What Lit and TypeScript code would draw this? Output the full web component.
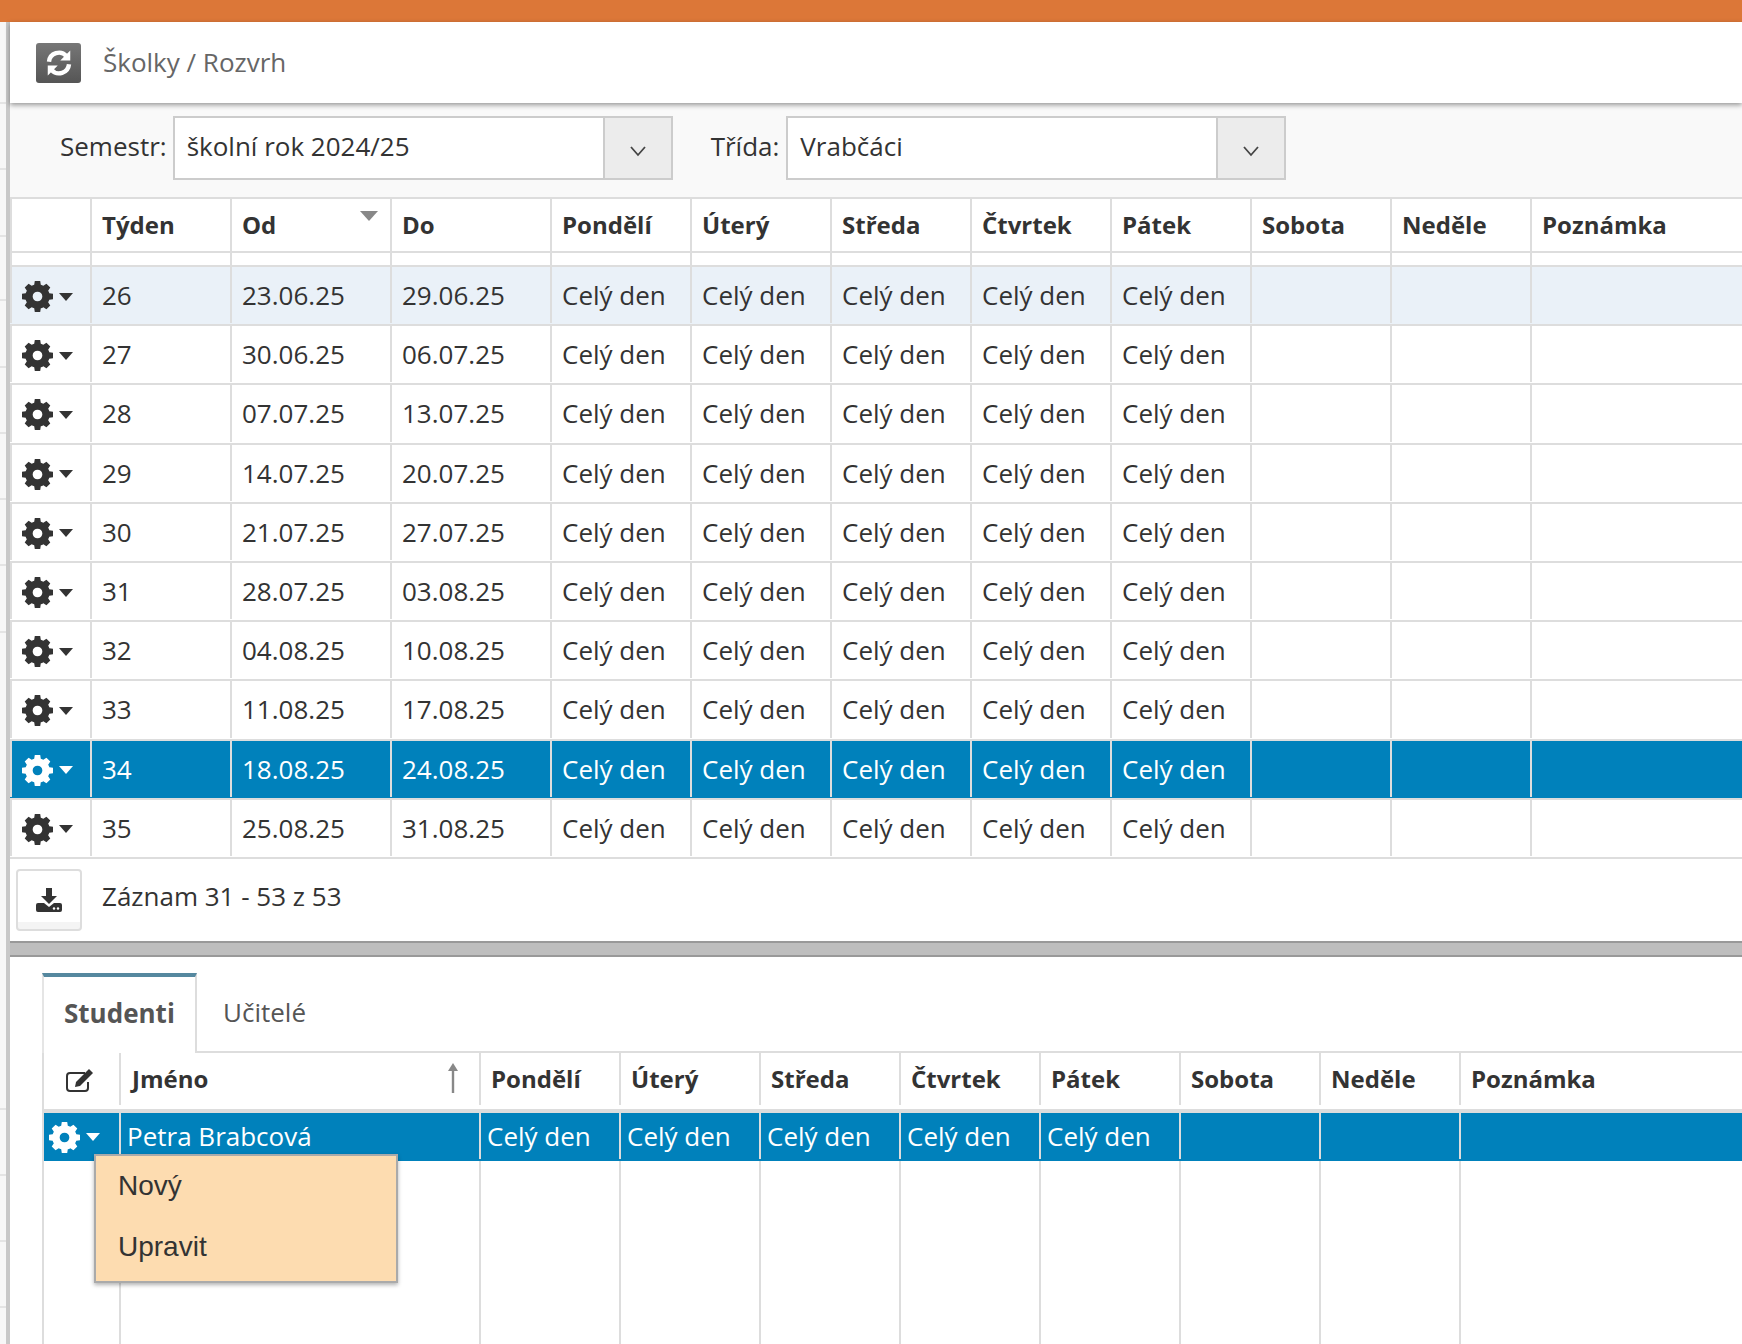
import { LitElement, html, css, svg } from "lit";
import { customElement } from "lit/decorators.js";

const GEAR = "M14 7.4v-2.8l-1.9-.3c-.1-.5-.3-.9-.6-1.300l1.100-1.600-2-2-1.600 1.100c-.4-.2-.8-.4-1.300-.6L7.400-2H4.600l-.3 1.900c-.5.1-.9.3-1.300.6L1.400-.6l-2 2 1.100 1.600c-.2.4-.4.8-.6 1.300L-2 4.600v2.800l1.900.3c.1.5.3.9.6 1.300l-1.100 1.600 2 2 1.600-1.100c.4.2.8.4 1.300.6l.3 1.900h2.800l.3-1.900c.5-.1.9-.3 1.300-.6l1.600 1.100 2-2-1.100-1.600c.2-.4.4-.8.6-1.300zM6 8.500A2.500 2.500 0 1 1 6 3.500a2.500 2.500 0 0 1 0 5z";

const gear = () => html`<span class="gear"><svg width="31" height="31" viewBox="-2 -2 16 16" aria-hidden="true"><path fill="currentColor" fill-rule="evenodd" d=${GEAR}></path></svg><i class="caret"></i></span>`;

const DAYS = ["Pondělí", "Úterý", "Středa", "Čtvrtek", "Pátek", "Sobota", "Neděle", "Poznámka"];
const WEEKS = [
  ["26", "23.06.25", "29.06.25"], ["27", "30.06.25", "06.07.25"], ["28", "07.07.25", "13.07.25"],
  ["29", "14.07.25", "20.07.25"], ["30", "21.07.25", "27.07.25"], ["31", "28.07.25", "03.08.25"],
  ["32", "04.08.25", "10.08.25"], ["33", "11.08.25", "17.08.25"], ["34", "18.08.25", "24.08.25"],
  ["35", "25.08.25", "31.08.25"],
];
const FULL = ["Celý den", "Celý den", "Celý den", "Celý den", "Celý den", "", "", ""];
const STRIP = [82, 66, 67, 64, 67, 66, 66, 66, 67, 477, 66, 66, 66];

@customElement("app-root")
export class AppRoot extends LitElement {
  static styles = css`
    :host { display: block; width: 1742px; height: 1344px; overflow: hidden; position: relative; background: #fff; font-family: "Open Sans", sans-serif; color: #333; font-size: 26px; }
    * { box-sizing: border-box; }
    .top { height: 22px; background: #dc7738; }
    .body { display: flex; height: 1322px; }
    .strip { width: 6px; background: #f7f7f7; flex: none; display: flex; flex-direction: column; }
    .strip div { flex: none; border-bottom: 2px solid #e4e4e4; }
    .main { flex: 1; min-width: 0; border-left: 4px solid #c8c8c8; display: flex; flex-direction: column; }
    .head { height: 81px; flex: none; display: flex; align-items: center; padding: 0 0 2px 26px; gap: 22px; background: #fff; box-shadow: 0 2px 5px rgba(0,0,0,.4); position: relative; color: #666; }
    .refresh { width: 45px; height: 40px; margin-top: 2px; border-radius: 3px; background: linear-gradient(#777, #555); color: #fff; display: flex; align-items: center; justify-content: center; }
    .tools { height: 94px; flex: none; background: #f9f9f9; display: flex; align-items: flex-start; padding: 13px 0 0 50px; }
    .tools label { line-height: 60px; margin-right: 6px; }
    .select { width: 500px; height: 64px; display: flex; border: 2px solid #ccc; background: #fff; margin-right: 38px; line-height: 56px; }
    .tools label.second { margin-right: 7px; }
    .select .val { flex: 1; padding-left: 12px; }
    .select .arrow { width: 68px; background: #ececec; border-left: 2px solid #ccc; display: flex; align-items: center; justify-content: center; padding-top: 6px; }
    .grid { flex: none; }
    .row { display: grid; grid-template-columns: 80px 140px 160px 160px repeat(7, 140px) 160px; border-bottom: 2px solid #ddd; }
    .cell { border-left: 2px solid #ddd; padding-left: 10px; white-space: nowrap; overflow: hidden; display: flex; align-items: center; position: relative; }
    .hrow { height: 56px; border-top: 2px solid #ddd; font-weight: 700; font-size: 24px; }
    .hrow .cell { padding-bottom: 2px; }
    .spacer { height: 14px; }
    .wrow { height: 59.2px; padding-bottom: 1px; }
    .wrow.soft { background: #eaf1f8; }
    .wrow.sel { background: #0081bb; color: #fff; }
    .sort { position: absolute; top: 12px; right: 12px; border: 9px solid transparent; border-top: 10px solid #888; border-bottom: 0; }
    .gear { display: flex; align-items: center; gap: 6px; margin-top: 3px; }
    .gear svg { flex: none; }
    .caret { flex: none; border: 7.500px solid transparent; border-top: 8px solid currentColor; border-bottom: 0; }
    .foot { height: 82px; flex: none; display: flex; align-items: center; padding: 1px 0 0 6px; gap: 20px; }
    .foot span { margin-top: -8px; }
    .btn { width: 66px; height: 62px; border: 2px solid #ddd; border-radius: 4px; background: linear-gradient(#fff 88%, #f4f4f4 88%); display: flex; align-items: center; justify-content: center; }
    .split { height: 16px; flex: none; background: #bebebe; border-top: 2px solid #999; border-bottom: 2px solid #999; }
    .lower { flex: 1; padding: 16px 0 0 32px; position: relative; min-height: 0; }
    .tabs { display: flex; height: 80px; border-bottom: 2px solid #ddd; }
    .tab { display: flex; align-items: center; padding: 0 22px; color: #555; }
    .tab.on { width: 155px; border-top: 4px solid #55889f; border-left: 2px solid #e5e5e5; border-right: 2px solid #ddd; font-weight: 700; margin-bottom: -2px; padding: 0 0 4px 20px; background: #fff; }
    .tab.off { padding: 1px 0 0 26px; }
    .table2 { border-left: 2px solid #ddd; height: 292px; display: flex; flex-direction: column; }
    .r2 { display: grid; grid-template-columns: 75px 360px repeat(7, 140px) 160px; }
    .r2 .cell { padding-left: 10px; }
    .r2 .cell:first-child { border-left: 0; padding-left: 0; }
    .h2 { height: 60px; border-bottom: 4px solid #ddd; font-weight: 700; font-size: 24px; padding-bottom: 4px; }
    .h2 .cell:first-child { justify-content: center; padding: 4px 4px 0 0; }
    .h2 .cell:nth-child(2) { padding-left: 11px; }
    .d2 { height: 48px; background: #0081bb; color: #fff; padding-bottom: 2px; }
    .r2.d2 .cell { padding-left: 6px; border-left-color: #ddd; }
    .r2.d2 .cell:first-child { padding-left: 5px; }
    .fill { flex: 1; }
    .fill .cell { height: 100%; }
    .up { position: absolute; right: 20px; top: 10px; color: #888; }
    .menu { position: absolute; left: 84px; top: 197px; width: 304px; height: 129px; background: #fddcb0; border: 2px solid #aaa; box-shadow: 0 2px 4px rgba(0,0,0,.3); font-family: "Liberation Sans", sans-serif; padding: 3px 0 0 22px; font-size: 28px; display: flex; flex-direction: column; }
    .menu div { height: 61px; line-height: 54px; }
  `;

  render() {
    const chevron = svg`<svg width="18" height="12" viewBox="0 0 18 12" aria-hidden="true"><path d="M2 2l7 8 7-8" fill="none" stroke="#444" stroke-width="1.800"></path></svg>`;
    return html`
      <div class="top"></div>
      <div class="body">
        <div class="strip">${STRIP.map((h) => html`<div style="height:${h}px"></div>`)}</div>
        <div class="main">
          <div class="head">
            <div class="refresh"><svg width="30" height="30" viewBox="0 0 24 24" aria-hidden="true"><path fill="none" stroke="#fff" stroke-width="3.500" d="M4 11a8 8 0 0 1 14-4.500M20 13a8 8 0 0 1-14 4.500"></path><path fill="#fff" d="M21 2v8h-8zM3 22v-8h8z"></path></svg></div>
            <span>Školky / Rozvrh</span>
          </div>
          <div class="tools">
            <label>Semestr:</label>
            <div class="select"><span class="val">školní rok 2024/25</span><span class="arrow">${chevron}</span></div>
            <label class="second">Třída:</label>
            <div class="select"><span class="val">Vrabčáci</span><span class="arrow">${chevron}</span></div>
          </div>
          <div class="grid">
            <div class="row hrow">
              <div class="cell"></div><div class="cell">Týden</div>
              <div class="cell">Od<i class="sort"></i></div><div class="cell">Do</div>
              ${DAYS.map((d) => html`<div class="cell">${d}</div>`)}
            </div>
            <div class="row spacer">${Array.from({ length: 12 }, () => html`<div class="cell"></div>`)}</div>
            ${WEEKS.map((w, i) => html`
              <div class="row wrow ${i === 0 ? "soft" : ""} ${i === 8 ? "sel" : ""}">
                <div class="cell">${gear()}</div>
                ${w.map((t) => html`<div class="cell">${t}</div>`)}
                ${FULL.map((t) => html`<div class="cell">${t}</div>`)}
              </div>`)}
          </div>
          <div class="foot">
            <div class="btn"><svg width="26" height="24" viewBox="0 0 26 24" aria-hidden="true"><path fill="#333" d="M10 0h6v8h5l-8 8-8-8h5zM2 15h6l5 4 5-4h6a2 2 0 0 1 2 2v5a2 2 0 0 1-2 2H2a2 2 0 0 1-2-2v-5a2 2 0 0 1 2-2z"></path><circle cx="18" cy="20.500" r="1.200" fill="#fff"></circle><circle cx="22" cy="20.500" r="1.200" fill="#fff"></circle></svg></div>
            <span>Záznam 31 - 53 z 53</span>
          </div>
          <div class="split"></div>
          <div class="lower">
            <div class="tabs"><div class="tab on">Studenti</div><div class="tab off">Učitelé</div></div>
            <div class="table2">
              <div class="r2 h2">
                <div class="cell"><svg width="29" height="24" viewBox="0 0 29 24" aria-hidden="true"><path fill="none" stroke="#333" stroke-width="2" d="M20 4H5a3 3 0 0 0-3 3v12a3 3 0 0 0 3 3h15a3 3 0 0 0 3-3v-6"></path><path fill="#333" d="M24 0l4 4-13 13-5 1 1-5z"></path></svg></div>
                <div class="cell">Jméno<svg class="up" width="12" height="30" viewBox="0 0 12 30" aria-hidden="true"><path fill="currentColor" d="M6 0l5 8H7.200v22H4.800V8H1z"></path></svg></div>
                ${DAYS.map((d) => html`<div class="cell">${d}</div>`)}
              </div>
              <div class="r2 d2">
                <div class="cell">${gear()}</div>
                <div class="cell">Petra Brabcová</div>
                ${FULL.map((t) => html`<div class="cell">${t}</div>`)}
              </div>
              <div class="r2 fill">${Array.from({ length: 10 }, () => html`<div class="cell"></div>`)}</div>
            </div>
            <div class="menu"><div>Nový</div><div>Upravit</div></div>
          </div>
        </div>
      </div>
    `;
  }
}
